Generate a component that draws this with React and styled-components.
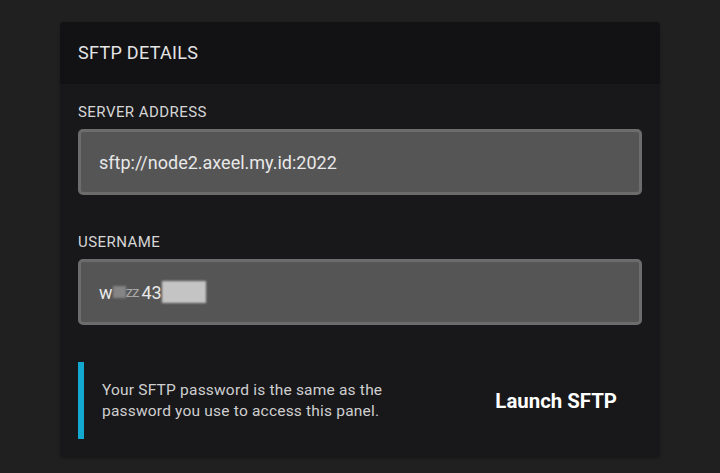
import React from "react";
import styled, { createGlobalStyle } from "styled-components";

const Global = createGlobalStyle`
  html, body { margin: 0; padding: 0; background: #202020; }
  body { font-family: Roboto, "Noto Sans", sans-serif; }
`;

const Page = styled.div`
  width: 720px;
  height: 473px;
  padding: 22px 60px 0;
  box-sizing: border-box;
`;

const Card = styled.section`
  background: #18181b;
  border-radius: 4px;
  overflow: hidden;
  box-shadow: 0 1px 3px rgba(0,0,0,0.3);
`;

const Header = styled.header`
  background: #121214;
  height: 62px;
  padding: 0 18px;
  display: flex;
  align-items: center;
  color: #e4e4e4;
  font-size: 18px;
  letter-spacing: 0.3px;
  padding-bottom: 2px;
  box-sizing: border-box;
`;

const Body = styled.div`
  padding: 20px 18px 18px;
  display: flex;
  flex-direction: column;
`;

const Field = styled.div`
  display: flex;
  flex-direction: column;
  margin-bottom: ${(p) => p.$mb}px;
`;

const Label = styled.label`
  color: #d6d6d6;
  font-size: 15px;
  letter-spacing: 0.45px;
  line-height: 16px;
  margin-bottom: 9px;
`;

const Input = styled.div`
  height: 66px;
  box-sizing: border-box;
  background: #555555;
  border: 3px solid #6c6c6c;
  border-radius: 5px;
  padding: 0 18px;
  display: flex;
  align-items: center;
  color: #e8e8e8;
  font-size: 18px;
`;

const Smudge = styled.span`
  display: inline-block;
  width: ${(p) => p.$w}px;
  height: ${(p) => p.$h}px;
  background: ${(p) => p.$c};
  filter: blur(1px);
  margin-left: ${(p) => p.$ml || 0}px;
  vertical-align: middle;
`;

const Faint = styled.span`
  color: #a8a8a8;
  font-size: 15px;
  letter-spacing: -1px;
`;

const Info = styled.div`
  margin-top: 37px;
  display: flex;
  align-items: center;
`;

const Note = styled.div`
  flex: 1;
  border-left: 6px solid #12a8d0;
  height: 77px;
  box-sizing: border-box;
  padding-left: 18px;
  display: flex;
  align-items: center;
  color: #cfcfcf;
  font-size: 15.5px;
  line-height: 21px;
  letter-spacing: 0.2px;
`;

const Launch = styled.button`
  background: none;
  border: none;
  color: #ffffff;
  font-family: Roboto, sans-serif;
  font-weight: 700;
  font-size: 20.4px;
  padding: 0;
  margin-right: 25px;
  cursor: pointer;
`;

export default function App() {
  return (
    <Page>
      <Global />
      <Card>
        <Header>SFTP DETAILS</Header>
        <Body>
          <Field $mb={39}>
            <Label>SERVER ADDRESS</Label>
            <Input>sftp://node2.axeel.my.id:2022</Input>
          </Field>
          <Field $mb={0}>
            <Label>USERNAME</Label>
            <Input>
              <span>w</span>
              <Smudge $w={13} $h={12} $c="#858585" />
              <Faint>zz</Faint>
              <span style={{ marginLeft: 3 }}>43</span>
              <Smudge $w={44} $h={22} $c="#c4c4c4" $ml={0} />
            </Input>
          </Field>
          <Info>
            <Note>
              Your SFTP password is the same as the
              <br />
              password you use to access this panel.
            </Note>
            <Launch>Launch SFTP</Launch>
          </Info>
        </Body>
      </Card>
    </Page>
  );
}
